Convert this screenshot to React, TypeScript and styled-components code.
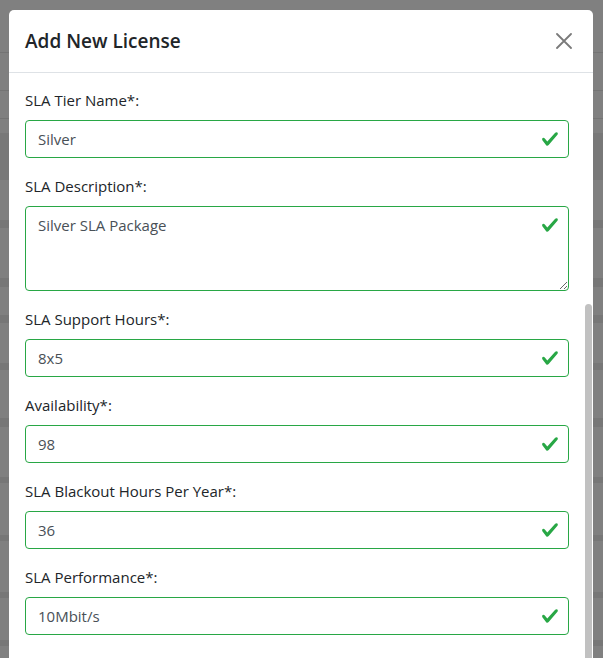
import React from "react";
import styled, { createGlobalStyle } from "styled-components";

const Global = createGlobalStyle`
  html, body { margin: 0; padding: 0; height: 100%; overflow: hidden; }
  body { font-family: "Open Sans", "Noto Sans", sans-serif; color: #212529; }
  *, *::before, *::after { box-sizing: border-box; }
`;

const bands: [number, number, string][] = [
  [52, 53, "#747474"],
  [90, 91, "#747474"],
  [118, 119, "#747474"],
  [133, 180, "#787878"],
  [220, 228, "#777777"],
  [278, 287, "#777777"],
  [315, 323, "#777777"],
  [363, 370, "#777777"],
  [418, 427, "#777777"],
  [477, 483, "#777777"],
  [535, 541, "#777777"],
  [592, 598, "#777777"],
  [640, 646, "#777777"],
];

const base = "#808080";
const stops: string[] = [];
let last = 0;
bands.forEach(([a, b, c]) => {
  stops.push(`${base} ${last}px ${a}px`);
  stops.push(`${c} ${a}px ${b}px`);
  last = b;
});
stops.push(`${base} ${last}px 100%`);
const backdropGradient = `linear-gradient(to bottom, ${stops.join(", ")})`;

const Backdrop = styled.div`
  width: 100vw;
  height: 100vh;
  overflow: hidden;
  background: ${backdropGradient};
  display: flex;
  align-items: flex-start;
  padding: 10px 10px 0 9px;
`;

const Modal = styled.div`
  position: relative;
  width: 584px;
  min-height: 700px;
  background: #fff;
  border-radius: 5px 5px 0 0;
  display: flex;
  flex-direction: column;
`;

const Header = styled.div`
  display: flex;
  align-items: center;
  justify-content: space-between;
  height: 63px;
  padding: 0 21px 1px 16px;
  border-bottom: 1px solid #dee2e6;
`;

const Title = styled.h5`
  margin: 0;
  font-size: 19px;
  line-height: 30px;
  font-weight: 600;
  color: #212529;
`;

const CloseButton = styled.button`
  border: 0;
  background: transparent;
  padding: 0;
  width: 16px;
  height: 16px;
  display: flex;
  cursor: pointer;
`;

const Body = styled.div`
  padding: 15px 24px 16px 16px;
  display: flex;
  flex-direction: column;
  gap: 16px;
`;

const Group = styled.div`
  display: flex;
  flex-direction: column;
`;

const Label = styled.label`
  display: block;
  font-size: 15px;
  line-height: 24px;
  margin-bottom: 8px;
  color: #212529;
`;

const Control = styled.div`
  position: relative;
`;

const fieldCss = `
  display: block;
  width: 100%;
  border: 1px solid #28a745;
  border-radius: 4px;
  padding: 6px 36px 6px 12px;
  font-family: "Open Sans", "Noto Sans", sans-serif;
  font-size: 15px;
  line-height: 24px;
  color: #495057;
  background: #fff;
  outline: none;
`;

const Input = styled.input`
  ${fieldCss}
  height: 38px;
`;

const TextArea = styled.textarea`
  ${fieldCss}
  height: 85px;
  resize: vertical;
`;

const Check = styled.svg<{ $top?: boolean }>`
  position: absolute;
  right: 10px;
  width: 18px;
  height: 18px;
  pointer-events: none;
  top: ${(p) => (p.$top ? "10px" : "50%")};
  transform: ${(p) => (p.$top ? "none" : "translateY(-50%)")};
`;

const Thumb = styled.div`
  position: absolute;
  right: 1px;
  top: 294px;
  width: 7px;
  height: 420px;
  background: #c1c1c1;
  border-radius: 4px 4px 0 0;
`;

const CheckIcon = ({ top }: { top?: boolean }) => (
  <Check $top={top} viewBox="0 0 8 8" aria-hidden="true">
    <path
      fill="#28a745"
      d="M2.3 6.73L.6 4.53c-.4-1.04.46-1.4 1.1-.8l1.1 1.4 3.4-3.8c.6-.63 1.6-.27 1.2.7l-4 4.6c-.43.5-.8.4-1.1.1z"
    />
  </Check>
);

const fields: { label: string; value: string; multi?: boolean }[] = [
  { label: "SLA Tier Name*:", value: "Silver" },
  { label: "SLA Description*:", value: "Silver SLA Package", multi: true },
  { label: "SLA Support Hours*:", value: "8x5" },
  { label: "Availability*:", value: "98" },
  { label: "SLA Blackout Hours Per Year*:", value: "36" },
  { label: "SLA Performance*:", value: "10Mbit/s" },
];

export default function App() {
  return (
    <>
      <Global />
      <Backdrop>
        <Modal role="dialog">
          <Header>
            <Title>Add New License</Title>
            <CloseButton aria-label="Close">
              <svg width="16" height="16" viewBox="0 0 16 16">
                <path d="M1 1L15 15M15 1L1 15" stroke="#7a7a7a" strokeWidth="1.8" strokeLinecap="round" />
              </svg>
            </CloseButton>
          </Header>
          <Body>
            {fields.map((f, i) => (
              <Group key={i}>
                <Label>{f.label}</Label>
                <Control>
                  {f.multi ? (
                    <TextArea defaultValue={f.value} rows={3} />
                  ) : (
                    <Input defaultValue={f.value} />
                  )}
                  <CheckIcon top={f.multi} />
                </Control>
              </Group>
            ))}
          </Body>
          <Thumb />
        </Modal>
      </Backdrop>
    </>
  );
}
